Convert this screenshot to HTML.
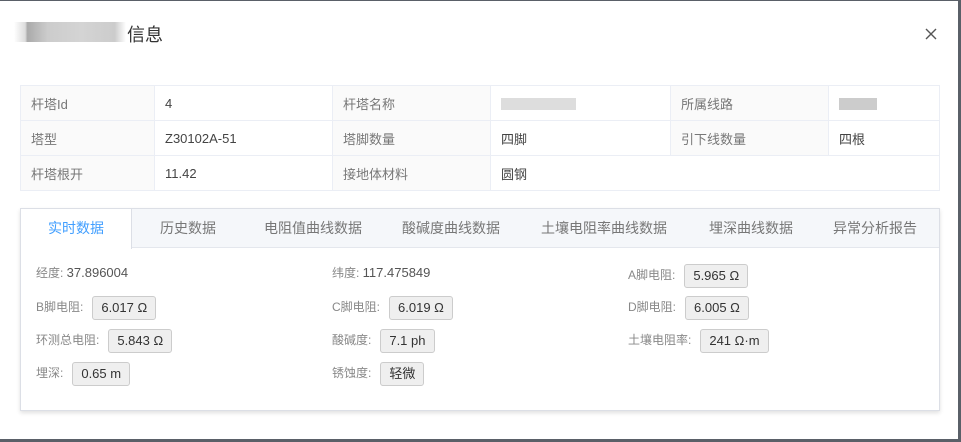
<!DOCTYPE html>
<html><head><meta charset="utf-8"><style>
*{margin:0;padding:0;box-sizing:border-box}
body{width:961px;height:442px;overflow:hidden;background:#5a6068;font-family:"Liberation Sans","Noto Sans CJK SC",sans-serif;position:relative}
.dlg{position:absolute;left:0;top:1px;width:958px;height:438px;background:#fff}
.a{position:absolute;white-space:nowrap}
.v{font-size:13px;color:#555}
table{position:absolute;left:20px;top:84px;width:920px;border-collapse:collapse;font-size:13px}
td{height:35px;border:1px solid #ebeef5;padding:0 10px;color:#444}
td.l{background:#fafafa;color:#777}
.card{position:absolute;left:20px;top:207px;width:920px;height:203px;border:1px solid #dcdfe6;box-shadow:0 2px 4px rgba(0,0,0,.12);background:#fff}
.hd{position:absolute;left:0;top:0;width:918px;height:39px;background:#f5f7fa;border-bottom:1px solid #e4e7ed}
.act{position:absolute;left:0;top:0;width:111px;height:40px;background:#fff;border-right:1px solid #dcdfe6;color:#409eff;font-size:14px;text-align:center;line-height:39px}
.tab{position:absolute;top:0;line-height:39px;font-size:14px;color:#777}
.b{display:inline-block;background:#efefef;border:1px solid #ccc;border-radius:3px;height:24px;line-height:22px;padding:0 8px;font-size:13px;color:#333;margin-left:9px;vertical-align:middle}
.r{position:absolute;font-size:12px;color:#888;white-space:nowrap}
</style></head><body>
<div class="dlg">
<div class="a" style="left:14px;top:21px;width:112px;height:20px;background:linear-gradient(90deg,#fff 0,#ddd 10%,#aaa 12%,#ccc 30%,#d4d4d4 60%,#ccc 90%,#fff 100%)"></div>
<div class="a" style="left:127px;top:20px;font-size:18px;color:#333">信息</div>
<svg class="a" style="left:925px;top:27px" width="12" height="12" viewBox="0 0 12 12"><path d="M1 1L11 11M11 1L1 11" stroke="#555" stroke-width="1.4"/></svg>
<table>
<tr><td class="l" style="width:134px">杆塔Id</td><td style="width:178px">4</td><td class="l" style="width:158px">杆塔名称</td><td style="width:180px"><span style="display:inline-block;width:75px;height:12px;background:#ddd;vertical-align:middle"></span></td><td class="l" style="width:158px">所属线路</td><td><span style="display:inline-block;width:38px;height:12px;background:#ccc;vertical-align:middle"></span></td></tr>
<tr><td class="l">塔型</td><td>Z30102A-51</td><td class="l">塔脚数量</td><td>四脚</td><td class="l">引下线数量</td><td>四根</td></tr>
<tr><td class="l">杆塔根开</td><td>11.42</td><td class="l">接地体材料</td><td colspan="3">圆钢</td></tr>
</table>
<div class="card">
<div class="hd"></div>
<div class="act">实时数据</div>
<div class="tab" style="left:139px">历史数据</div>
<div class="tab" style="left:243px">电阻值曲线数据</div>
<div class="tab" style="left:381px">酸碱度曲线数据</div>
<div class="tab" style="left:520px">土壤电阻率曲线数据</div>
<div class="tab" style="left:688px">埋深曲线数据</div>
<div class="tab" style="left:812px">异常分析报告</div>
<div class="r" style="left:15px;top:55px">经度: <span class="v">37.896004</span></div>
<div class="r" style="left:311px;top:55px">纬度: <span class="v">117.475849</span></div>
<div class="r" style="left:607px;top:55px">A脚电阻:<span class="b">5.965 Ω</span></div>
<div class="r" style="left:15px;top:87px">B脚电阻:<span class="b">6.017 Ω</span></div>
<div class="r" style="left:311px;top:87px">C脚电阻:<span class="b">6.019 Ω</span></div>
<div class="r" style="left:607px;top:87px">D脚电阻:<span class="b">6.005 Ω</span></div>
<div class="r" style="left:15px;top:120px">环测总电阻:<span class="b">5.843 Ω</span></div>
<div class="r" style="left:311px;top:120px">酸碱度:<span class="b">7.1 ph</span></div>
<div class="r" style="left:607px;top:120px">土壤电阻率:<span class="b">241 Ω·m</span></div>
<div class="r" style="left:15px;top:153px">埋深:<span class="b">0.65 m</span></div>
<div class="r" style="left:311px;top:153px">锈蚀度:<span class="b">轻微</span></div>
</div>
</div>
</body></html>
